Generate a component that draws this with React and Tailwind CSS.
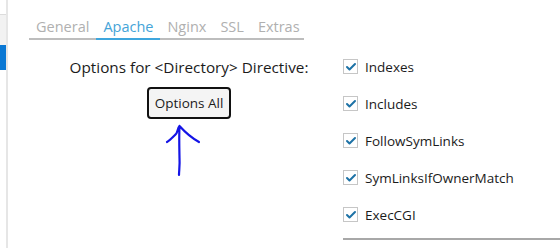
import { Check } from "lucide-react";

const tabs = ["General", "Apache", "Nginx", "SSL", "Extras"];
const options = ["Indexes", "Includes", "FollowSymLinks", "SymLinksIfOwnerMatch", "ExecCGI"];

const App = () => {
  return (
    <div
      className="relative w-[560px] h-[248px] overflow-hidden bg-white flex"
      style={{ fontFamily: '"Open Sans", "Noto Sans", sans-serif' }}
    >
      {/* sidebar edge */}
      <div className="w-[8px] shrink-0 border-r-2 border-[#e6e6e6] flex flex-col pt-[14px]">
        <div className="h-[31px] bg-[#f2f2f2] border-t border-[#dcdcdc]" />
        <div className="h-[25px] bg-[#0a78d4]" />
      </div>

      <div className="flex-1 flex flex-col">
        {/* tabs */}
        <div className="ml-[21px] mt-[16px] w-[275px] flex border-b-2 border-[#bdbdbd] text-[14.5px] leading-[22px] text-[#b0b0b0]">
          {tabs.map((tab) => (
            <div
              key={tab}
              className={`px-[7px] -mb-[2px] border-b-2 ${
                tab === "Apache" ? "border-[#3ea6dd] text-[#45a4d8]" : "border-transparent"
              }`}
            >
              {tab}
            </div>
          ))}
        </div>

        {/* content */}
        <div className="flex flex-1 text-[13.5px] text-[#1b1b1b]">
          <div className="w-[302px] pl-[60px] pt-[16px] flex flex-col items-center">
            <div className="text-[15.3px] leading-[22px]">Options for &lt;Directory&gt; Directive:</div>
            <button className="mt-[9px] h-[32px] px-[6px] rounded-[4px] border-2 border-[#111] bg-[#f4f4f4] text-[13.5px] leading-[20px]">
              Options All
            </button>
          </div>

          <div className="flex-1 pl-[33px] pt-[17px] flex flex-col">
            {options.map((opt) => (
              <div key={opt} className="h-[37px] flex items-start gap-[7px]">
                <div className="mt-[2px] w-[15px] h-[15px] border border-[#c6c6c6] flex items-center justify-center">
                  <Check size={12} strokeWidth={4} className="text-[#1d72a6]" />
                </div>
                <span className="leading-[20px]">{opt}</span>
              </div>
            ))}
            <div className="mt-[-4px] h-[2px] bg-[#a8a8a8]" />
          </div>
        </div>
      </div>

      {/* hand-drawn annotation arrow */}
      <svg className="absolute left-[160px] top-[120px]" width="50" height="60" viewBox="0 0 50 60">
        <path
          d="M19 55 C19 50 20 46 19.5 38 C19.3 28 19 16 19.5 6 M19.5 6 C17 9 18 13 15 15 C12 18 9 21 7 22 M19.5 6 C24 11 30 17 39 22"
          fill="none"
          stroke="#1414e6"
          strokeWidth="2.2"
          strokeLinecap="round"
        />
      </svg>
    </div>
  );
};

export default App;
